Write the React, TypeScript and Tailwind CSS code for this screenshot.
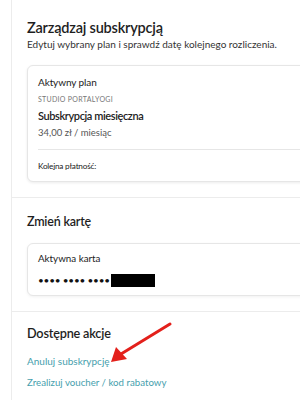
import React from "react";

export default function App() {
  return (
    <div
      className="relative h-[400px] w-[300px] overflow-hidden bg-white text-[#222]"
      style={{ fontFamily: "Lato, 'Noto Sans', sans-serif" }}
    >
      <div className="ml-[11px] h-full border-l border-[#ececec]">
        {/* Section 1 */}
        <div className="border-b border-[#ececec] pl-[15px] pt-[18px] pb-[15px]">
          <h1 className="whitespace-nowrap text-[14.5px] font-semibold leading-[20px] tracking-[-0.2px] text-[#1e1e1e]">
            Zarządzaj subskrypcją
          </h1>
          <p className="whitespace-nowrap text-[10px] leading-[12px] text-[#333]">
            Edytuj wybrany plan i sprawdź datę kolejnego rozliczenia.
          </p>
          <div className="mt-[15px] mr-[-12px] rounded-[6px] border border-[#e6e6e6] bg-white pl-[10px] shadow-[0_1px_3px_rgba(0,0,0,0.08)]">
            <div className="pt-[9px] text-[10px] leading-[14px] tracking-[-0.1px] text-[#222]">Aktywny plan</div>
            <div className="mt-[5px] text-[7px] uppercase leading-[10px] tracking-[0.3px] text-[#777]">
              Studio Portalyogi
            </div>
            <div className="mt-[4px] whitespace-nowrap text-[11px] font-semibold leading-[15px] tracking-[-0.4px] text-[#222]">
              Subskrypcja miesięczna
            </div>
            <div className="mt-[3px] text-[9.5px] leading-[13px] text-[#555]">34,00 zł / miesiąc</div>
            <div className="mt-[10px] border-t border-[#e6e6e6]" />
            <div className="pt-[11px] pb-[9px] text-[8.2px] leading-[11px] tracking-[-0.2px] text-[#222]">
              Kolejna płatność:
            </div>
          </div>
        </div>

        {/* Section 2 */}
        <div className="border-b border-[#ececec] pl-[15px] pt-[16px] pb-[15px]">
          <h2 className="text-[12.5px] font-semibold leading-[16px] tracking-[-0.2px] text-[#1e1e1e]">Zmień kartę</h2>
          <div className="mt-[13px] mr-[-12px] rounded-[6px] border border-[#e6e6e6] bg-white pl-[10px] pb-[8px] shadow-[0_1px_3px_rgba(0,0,0,0.06)]">
            <div className="pt-[8px] text-[9.8px] leading-[13px] text-[#222]">Aktywna karta</div>
            <div className="mt-[8px] flex h-[14px] items-center">
              <span className="text-[10px] leading-[14px] tracking-[-0.2px] text-[#111]">
                •••• •••• ••••
              </span>
              <span className="ml-[1px] inline-block h-[13px] w-[44px] bg-black" />
            </div>
          </div>
        </div>

        {/* Section 3 */}
        <div className="pl-[15px] pt-[13px]">
          <h2 className="text-[12.7px] font-semibold leading-[16px] tracking-[-0.2px] text-[#1e1e1e]">Dostępne akcje</h2>
          <div className="mt-[14px] text-[10px] leading-[13px] text-[#46a0ad]">Anuluj subskrypcję</div>
          <div className="mt-[8px] whitespace-nowrap text-[9.7px] leading-[13px] text-[#46a0ad]">
            Zrealizuj voucher / kod rabatowy
          </div>
        </div>
      </div>

      {/* red arrow annotation */}
      <svg className="pointer-events-none absolute left-0 top-0" width="300" height="400">
        <line x1="170" y1="324" x2="121" y2="354" stroke="#e3201b" strokeWidth="3" strokeLinecap="round" />
        <polygon points="111,362 116,347 127,359" fill="#e3201b" />
      </svg>
    </div>
  );
}
